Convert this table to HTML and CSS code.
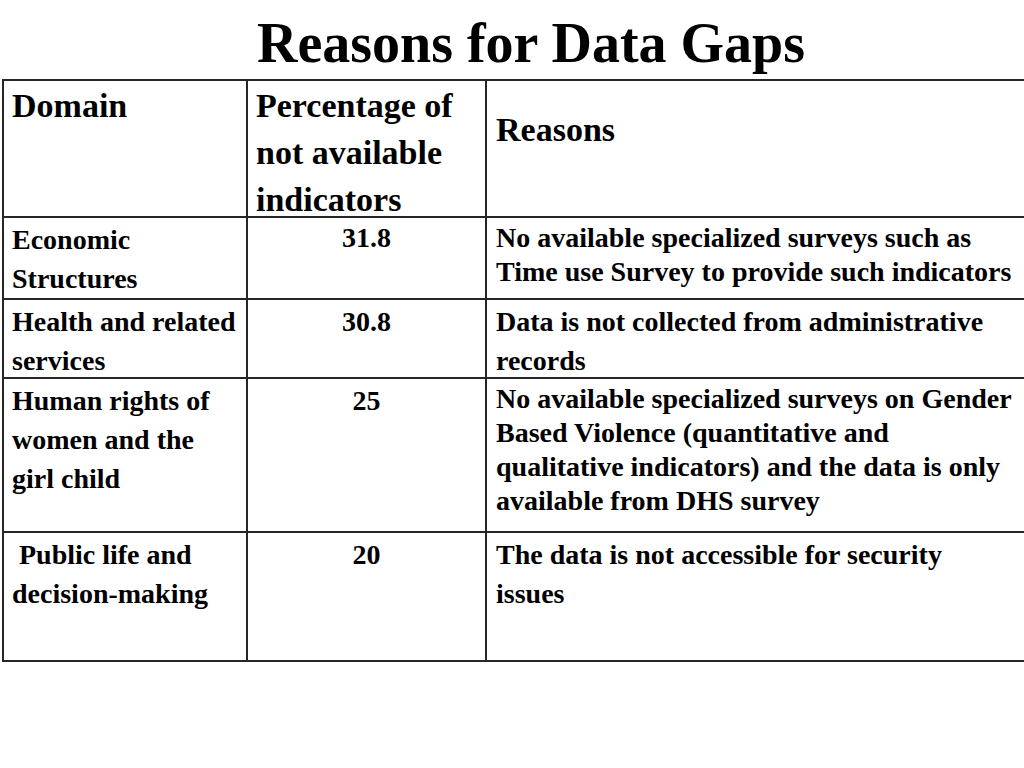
FILE: index.html
```html
<!DOCTYPE html>
<html>
<head>
<meta charset="utf-8">
<link rel="stylesheet" href="styles.css">
</head>
<body>
<div class="slide">
  <h1 class="title">Reasons for Data Gaps</h1>
  <table class="gaps">
    <colgroup>
      <col class="c-domain">
      <col class="c-pct">
      <col class="c-reason">
    </colgroup>
    <tr class="row-head">
      <th class="h-domain"><div class="in">Domain</div></th>
      <th class="h-pct"><div class="in">Percentage of not available indicators</div></th>
      <th class="h-reason"><div class="in">Reasons</div></th>
    </tr>
    <tr class="row-1">
      <td class="domain"><div class="in">Economic Structures</div></td>
      <td class="pct tight"><div class="in">31.8</div></td>
      <td class="reason tight"><div class="in">No available specialized surveys such as<br>Time use Survey to provide such indicators</div></td>
    </tr>
    <tr class="row-2">
      <td class="domain"><div class="in">Health and related services</div></td>
      <td class="pct"><div class="in">30.8</div></td>
      <td class="reason"><div class="in">Data is not collected from administrative<br>records</div></td>
    </tr>
    <tr class="row-3">
      <td class="domain"><div class="in">Human rights of women and the girl child</div></td>
      <td class="pct"><div class="in">25</div></td>
      <td class="reason tight"><div class="in">No available specialized surveys on Gender<br>Based Violence (quantitative and<br>qualitative indicators) and the data is only<br>available from DHS survey</div></td>
    </tr>
    <tr class="row-4">
      <td class="domain"><div class="in">&nbsp;Public life and decision-making</div></td>
      <td class="pct"><div class="in">20</div></td>
      <td class="reason"><div class="in">The data is not accessible for security<br>issues</div></td>
    </tr>
  </table>
</div>
</body>
</html>
```

FILE: styles.css
```css
html, body {
  margin: 0;
  padding: 0;
  background: #ffffff;
}

body {
  width: 1024px;
  height: 768px;
  overflow: hidden;
  font-family: "Liberation Serif", "Times New Roman", serif;
  color: #000000;
}

.slide {
  width: 1024px;
  height: 768px;
  overflow: hidden;
}

.title {
  margin: 0;
  padding: 12px 0 0 38px;
  height: 62px;
  line-height: 62px;
  font-size: 56px;
  font-weight: bold;
  text-align: center;
}

.gaps {
  margin: 5px 0 0 2px;
  border-collapse: collapse;
  table-layout: fixed;
  width: 1060px;
}

.c-domain { width: 244px; }
.c-pct { width: 239px; }
.c-reason { width: 577px; }

.gaps th,
.gaps td {
  border: 2px solid #262626;
  vertical-align: top;
  text-align: left;
  font-weight: bold;
  padding: 2px 8px 0 8px;
  box-sizing: border-box;
}

.gaps .in {
  margin-bottom: -20px;
}

.gaps th {
  font-size: 34px;
  line-height: 47px;
  padding-top: 1px;
}

.gaps th.h-reason {
  padding-top: 25px;
  padding-left: 9px;
}

.gaps td {
  font-size: 28px;
  line-height: 39px;
}

.gaps td.tight {
  line-height: 34px;
  padding-top: 3px;
}

.gaps td.pct {
  text-align: center;
}

.gaps td.reason {
  white-space: nowrap;
  padding-left: 9px;
}

.row-head { height: 137px; }
.row-1 { height: 82px; }
.row-2 { height: 79px; }
.row-3 { height: 154px; }
.row-4 { height: 129px; }
```
